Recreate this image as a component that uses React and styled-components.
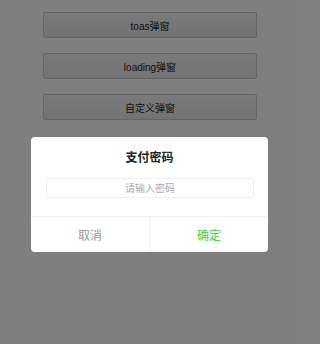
import React from "react";
import styled, { createGlobalStyle } from "styled-components";

const GlobalStyle = createGlobalStyle`
  html, body {
    margin: 0;
    padding: 0;
    background: #808080;
    font-family: "Liberation Sans", "Noto Sans CJK SC", sans-serif;
  }
`;

const Page = styled.div`
  position: relative;
  width: 300px;
  height: 344px;
  overflow: hidden;
  background: #ffffff;
  display: flex;
  flex-direction: column;
  align-items: center;
  padding-top: 12px;
  box-sizing: border-box;
  gap: 15px;
`;

const DemoButton = styled.button`
  width: 214px;
  height: 26px;
  padding: 0;
  border: 1px solid #c8c8c8;
  border-radius: 2px;
  background: linear-gradient(#f4f4f4, #e6e6e6);
  color: #222;
  font-family: "Liberation Sans", "Noto Sans CJK SC", sans-serif;
  font-size: 10px;
  cursor: pointer;
`;

const Mask = styled.div`
  position: absolute;
  inset: 0;
  background: rgba(0, 0, 0, 0.5);
`;

const Dialog = styled.div`
  position: absolute;
  left: 31px;
  top: 137px;
  width: 237px;
  height: 115px;
  background: #fff;
  border-radius: 4px;
  display: flex;
  flex-direction: column;
  overflow: hidden;
`;

const Title = styled.div`
  padding-top: 13px;
  height: 16px;
  line-height: 16px;
  text-align: center;
  font-size: 12px;
  font-weight: bold;
  color: #222;
`;

const PasswordInput = styled.input`
  margin: 12px 14px 0 15px;
  height: 20px;
  padding: 0;
  border: 1px solid #efefef;
  box-sizing: border-box;
  text-align: center;
  font-family: "Liberation Sans", "Noto Sans CJK SC", sans-serif;
  font-size: 10px;
  outline: none;

  &::placeholder {
    color: #aaa;
  }
`;

const Actions = styled.div`
  margin-top: auto;
  height: 35px;
  display: flex;
  border-top: 1px solid #f2f2f2;
`;

const Action = styled.div`
  flex: 1;
  display: flex;
  align-items: center;
  justify-content: center;
  font-size: 12px;
  color: ${(p) => (p.$primary ? "#3ccf4e" : "#999")};

  & + & {
    border-left: 1px solid #f2f2f2;
  }
`;

export default function App() {
  return (
    <>
      <GlobalStyle />
      <Page>
        <DemoButton>toas弹窗</DemoButton>
        <DemoButton>loading弹窗</DemoButton>
        <DemoButton>自定义弹窗</DemoButton>
        <Mask />
        <Dialog>
          <Title>支付密码</Title>
          <PasswordInput type="password" placeholder="请输入密码" />
          <Actions>
            <Action>取消</Action>
            <Action $primary>确定</Action>
          </Actions>
        </Dialog>
      </Page>
    </>
  );
}
